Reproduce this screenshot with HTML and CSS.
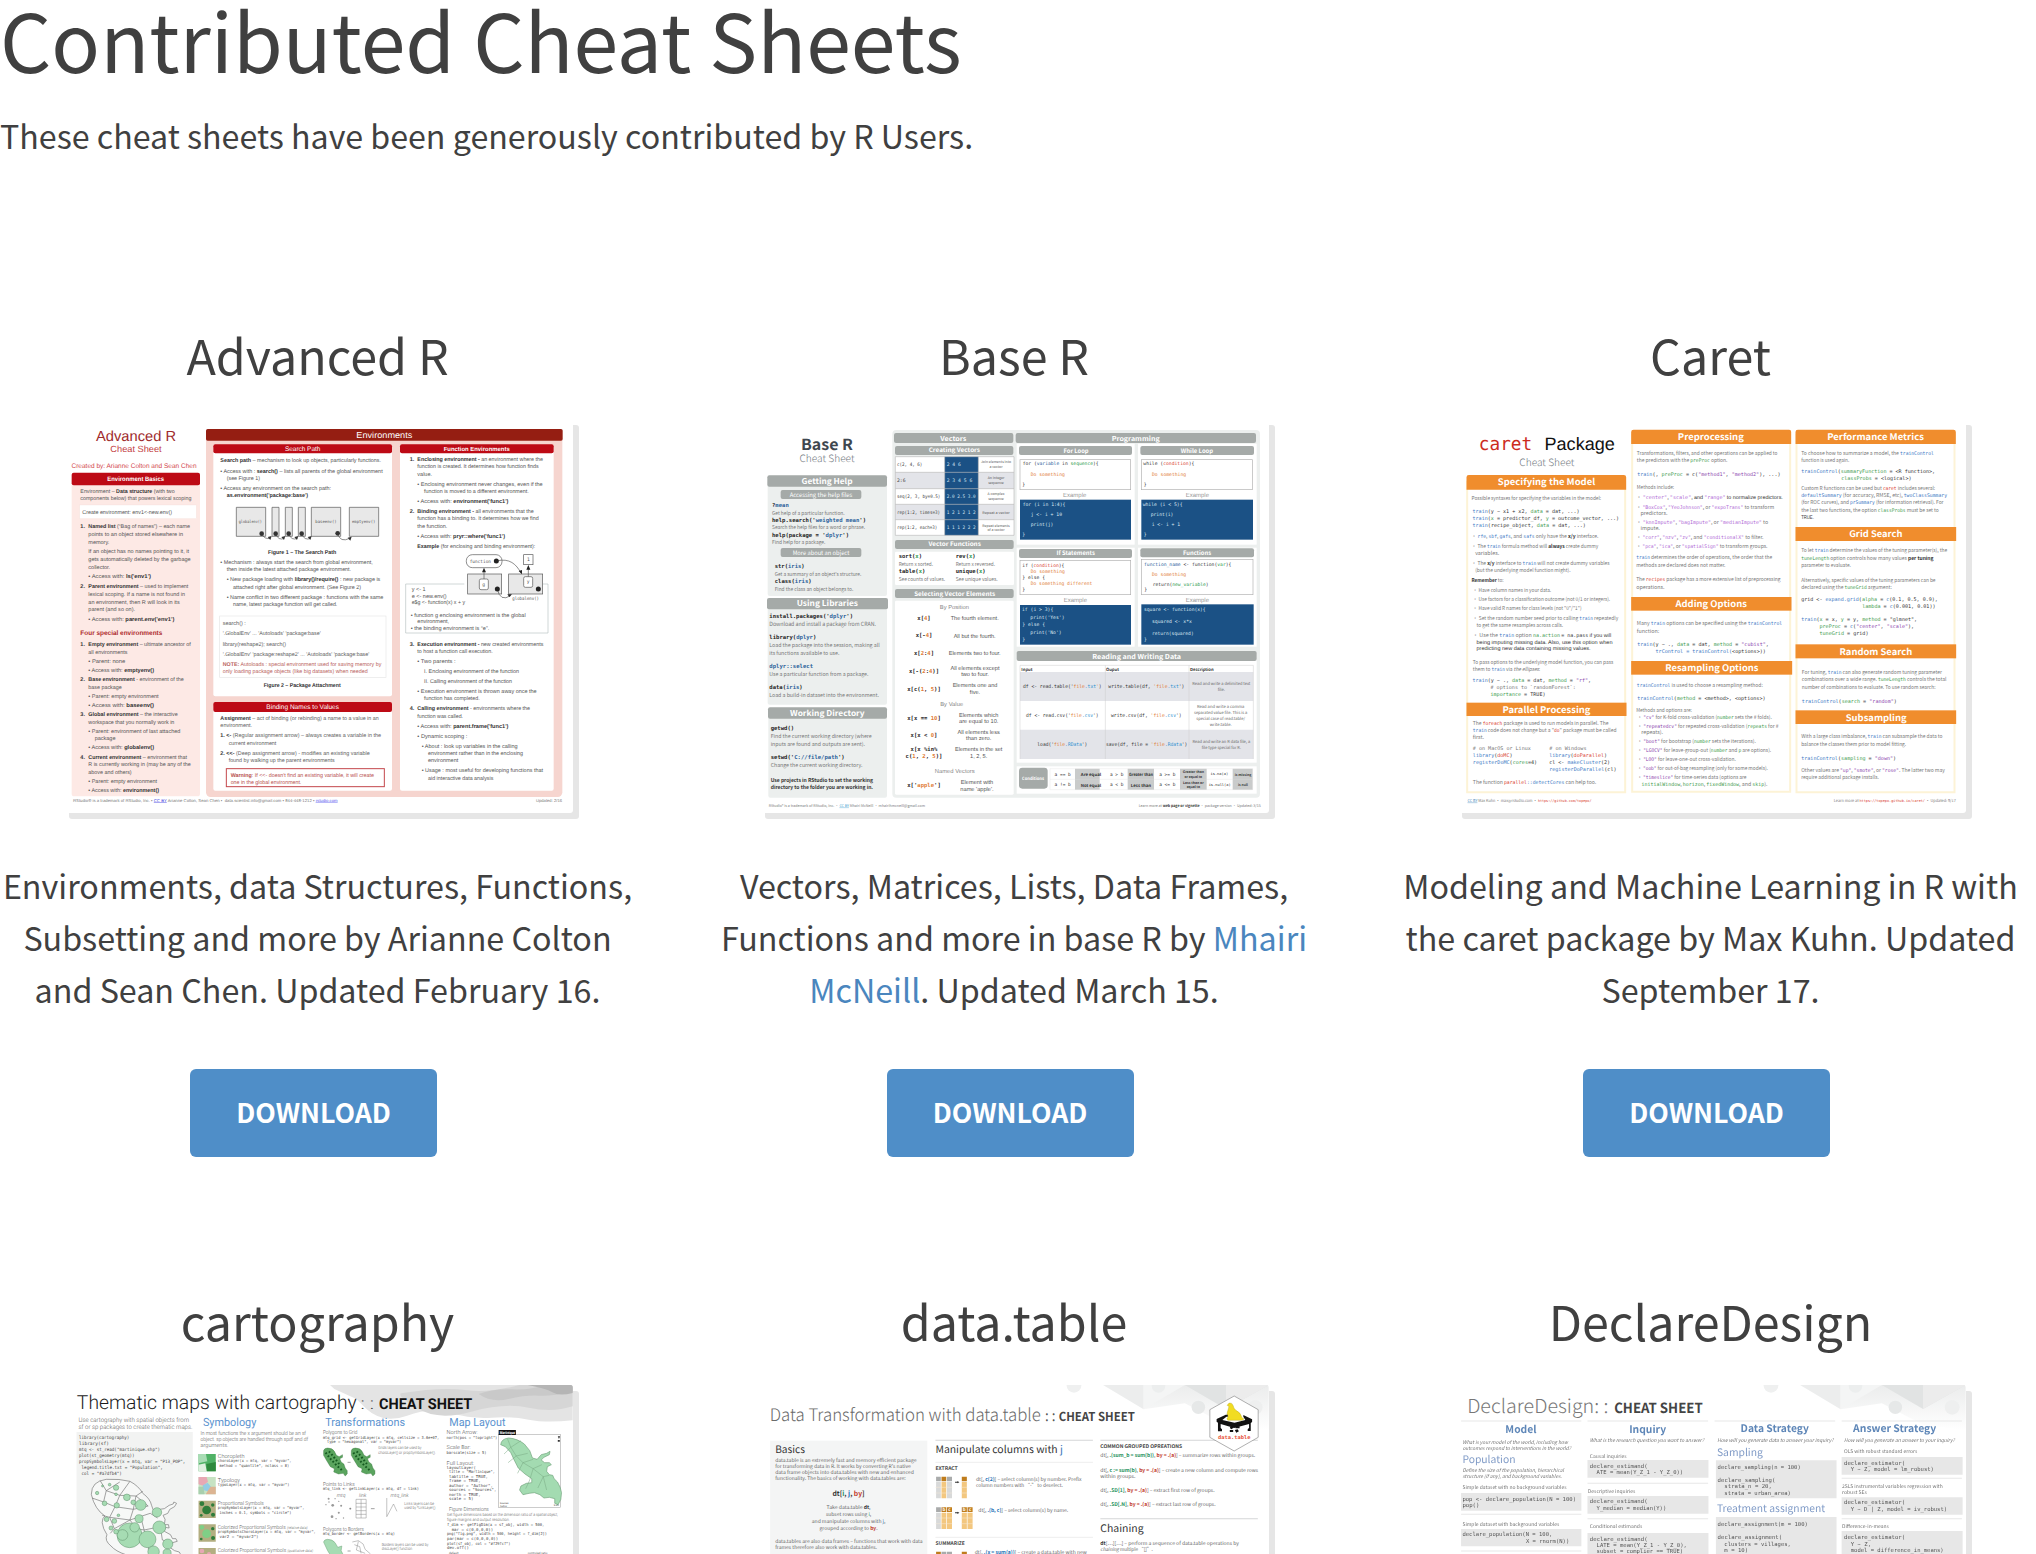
FILE: index.html
```html
<!DOCTYPE html>
<html lang="en">
<head>
<meta charset="utf-8">
<title>Contributed Cheat Sheets</title>
<link rel="stylesheet" href="styles.css">
</head>
<body>
<main class="page">
<h1 class="page-title">Contributed Cheat Sheets</h1>
<p class="lead">These cheat sheets have been generously contributed by R Users.</p>
<section class="grid">

<article class="card">
<h2 class="card-title">Advanced R</h2>
<svg class="thumb arial" viewBox="12 12 1530 1182">
<g class="mid" fill="#a02a2c"><text x="231" y="78" font-size="44" textLength="240">Advanced R</text><text x="231" y="111" font-size="27" fill="#c23a40" textLength="154">Cheat Sheet</text><text x="225" y="159" font-size="20" fill="#d2454b" textLength="375">Created by: Arianne Colton and Sean Chen</text></g>
<rect x="38" y="190" width="385" height="954" rx="8" fill="#fde9e5"/>
<rect x="38" y="173" width="385" height="38" rx="6" fill="#bd0a15"/>
<rect x="441" y="60" width="1069" height="1086" rx="14" fill="#f6d5cf"/>
<rect x="441" y="42" width="1070" height="35" rx="5" fill="#951e12"/>
<rect x="463" y="95" width="536" height="749" rx="6" fill="#fff"/><rect x="463" y="870" width="536" height="257" rx="6" fill="#fff"/><rect x="1023" y="95" width="461" height="1032" rx="6" fill="#fff"/>
<g fill="#bd0a15"><rect x="463" y="88" width="536" height="27" rx="6"/><rect x="463" y="861" width="536" height="30" rx="6"/><rect x="1023" y="88" width="461" height="27" rx="6"/></g>
<g class="mid" fill="#fff"><text x="230" y="199" font-size="19" class="b" textLength="170">Environment Basics</text><text x="976" y="69" font-size="26" textLength="168">Environments</text><text x="731" y="108" font-size="20" textLength="106">Search Path</text><text x="1253" y="108" font-size="18" class="b" textLength="198">Function Environments</text><text x="731" y="883" font-size="20" textLength="218">Binding Names to Values</text></g>
<rect x="62" y="270" width="350" height="41" fill="#fff" stroke="#f3ddd9"/>
<g font-size="16.5" fill="#555">
<text x="64" y="233" textLength="283">Environment – <tspan class="bk">Data structure</tspan> (with two</text>
<text x="64" y="256" textLength="333">components below) that powers lexical scoping</text>
<text x="70" y="296" textLength="269">Create environment: env1&lt;-new.env()</text>
<text x="64" y="338" class="bk">1.</text><text x="88" y="338" textLength="305"><tspan class="bk">Named list</tspan> (“Bag of names”) – each name</text>
<text x="88" y="362" textLength="284">points to an object stored elsewhere in</text>
<text x="88" y="386">memory.</text>
<text x="88" y="414" textLength="302">If an object has no names pointing to it, it</text>
<text x="88" y="438" textLength="307">gets automatically deleted by the garbage</text>
<text x="88" y="462">collector.</text>
<text x="88" y="490" textLength="188">•  Access with: <tspan class="bk">ls('env1')</tspan></text>
<text x="64" y="518" class="bk">2.</text><text x="88" y="518" textLength="300"><tspan class="bk">Parent environment</tspan> – used to implement</text>
<text x="88" y="542" textLength="290">lexical scoping. If a name is not found in</text>
<text x="88" y="566" textLength="274">an environment, then R will look in its</text>
<text x="88" y="589" textLength="140">parent (and so on).</text>
<text x="88" y="618" textLength="258">•  Access with: <tspan class="bk">parent.env('env1')</tspan></text>
<text x="64" y="661" font-size="20" class="b" fill="#ae2b2d" textLength="246">Four special environments</text>
<text x="64" y="694" class="bk">1.</text><text x="88" y="694" textLength="307"><tspan class="bk">Empty environment</tspan> – ultimate ancestor of</text>
<text x="88" y="717" textLength="117">all environments</text>
<text x="88" y="744" textLength="111">•  Parent: none</text>
<text x="88" y="771" textLength="197">•  Access with: <tspan class="bk">emptyenv()</tspan></text>
<text x="64" y="798" class="bk">2.</text><text x="88" y="798" textLength="286"><tspan class="bk">Base environment</tspan> - environment of the</text>
<text x="88" y="821" textLength="100">base package</text>
<text x="88" y="848" textLength="211">•  Parent: empty environment</text>
<text x="88" y="876" textLength="197">•  Access with: <tspan class="bk">baseenv()</tspan></text>
<text x="64" y="903" class="bk">3.</text><text x="88" y="903" textLength="268"><tspan class="bk">Global environment</tspan> – the interactive</text>
<text x="88" y="926" textLength="258">workspace that you normally work in</text>
<text x="88" y="953" textLength="276">•  Parent: environment of last attached</text>
<text x="107" y="976">package</text>
<text x="88" y="1003" textLength="197">•  Access with: <tspan class="bk">globalenv()</tspan></text>
<text x="64" y="1031" class="bk">4.</text><text x="88" y="1031" textLength="296"><tspan class="bk">Current environment</tspan> – environment that</text>
<text x="88" y="1054" textLength="307">R is currently working in (may be any of the</text>
<text x="88" y="1076" textLength="130">above and others)</text>
<text x="88" y="1103" textLength="206">• Parent: empty environment</text>
<text x="88" y="1130" textLength="212">• Access with: <tspan class="bk">environment()</tspan></text>
<text x="484" y="142" textLength="482"><tspan class="bk">Search path</tspan> – mechanism  to look up objects, particularly functions.</text>
<text x="484" y="173" textLength="487">•  Access with : <tspan class="bk">search()</tspan> – lists all parents of the global environment</text>
<text x="503" y="194" textLength="100">(see Figure 1)</text>
<text x="484" y="225" textLength="332">•  Access any environment on the search path:</text>
<text x="503" y="246" class="bk" textLength="244">as.environment('package:base')</text>
<text x="627" y="417" class="bk" textLength="205">Figure 1 – The Search Path</text>
<text x="484" y="447" textLength="457">•  Mechanism : always start the search from global environment,</text>
<text x="503" y="469" textLength="373">then inside the latest attached package environment.</text>
<text x="503" y="499" textLength="461">•  New package loading with <tspan class="bk">library()/require()</tspan> : new package is</text>
<text x="522" y="521" textLength="384">attached right after global environment. (See Figure 2)</text>
<text x="503" y="551" textLength="470">•  Name conflict in two different package : functions with the same</text>
<text x="522" y="573" textLength="313">name, latest package function will get called.</text>
</g>
<rect x="482" y="603" width="499" height="184" fill="none" stroke="#e6e6e6" stroke-width="2"/>
<g font-size="16.5" fill="#606060">
<text x="491" y="631">search() :</text><text x="491" y="661" textLength="294">'.GlobalEnv' ... 'Autoloads' 'package:base'</text><text x="491" y="692" textLength="190">library(reshape2); search()</text><text x="491" y="722" textLength="440">'.GlobalEnv'  'package:reshape2' ... 'Autoloads' 'package:base'</text>
<g fill="#b95f60"><text x="491" y="752" textLength="476"><tspan class="b">NOTE:</tspan> Autoloads : special environment used for saving memory by</text><text x="491" y="773" textLength="435">only loading package objects (like big datasets) when needed</text></g>
<text x="614" y="816" class="bk" textLength="231">Figure 2 – Package Attachment</text>
<text x="484" y="916" textLength="475"><tspan class="bk">Assignment</tspan> – act of binding (or rebinding) a name to a value in an</text><text x="484" y="937">environment.</text>
<text x="484" y="967" textLength="482"><tspan class="bk">1.  &lt;-</tspan> (Regular assignment arrow) – always creates a variable in the</text><text x="509" y="989" textLength="143">current environment</text>
<text x="484" y="1019" textLength="448"><tspan class="bk">2.  &lt;&lt;-</tspan> (Deep assignment arrow) - modifies an existing variable</text><text x="509" y="1041" textLength="318">found by walking up the parent environments</text>
<rect x="502" y="1061" width="474" height="54" fill="none" stroke="#c4474c" stroke-width="3"/>
<g fill="#b8504f"><text x="515" y="1086" textLength="430"><tspan class="b">Warning</tspan>: If &lt;&lt;- doesn't find an existing variable, it will create</text><text x="515" y="1106" textLength="212">one in the global environment.</text></g>
</g>
<g fill="#e8e8e8" stroke="#555" stroke-width="2"><path d="M532 277h88v87h-88zM639 277h21v87h-21zM679 277h21v87h-21zM718 277h21v87h-21zM757 277h88v87h-88zM871 277h88v87h-88z"/><path fill="none" d="M608 356q8 18 26 14M650 356q8 22 26 14M689 356q8 22 26 14M728 356q8 22 27 14M836 356q8 28 36 14"/></g>
<g fill="#333"><circle cx="608" cy="356" r="7"/><circle cx="650" cy="356" r="7"/><circle cx="689" cy="356" r="7"/><circle cx="728" cy="356" r="7"/><circle cx="836" cy="355" r="7"/><path d="M626 366l12-3-4 12zM667 366l12-3-4 12zM706 366l12-3-4 12zM746 366l12-3-4 12zM866 368l12-3-4 12z"/></g>
<g class="mono" font-size="12.5" fill="#555"><text x="539" y="325" textLength="70">globalenv()</text><text x="769" y="325" textLength="64">baseenv()</text><text x="879" y="325" textLength="70">emptyenv()</text></g>
<g font-size="16.5" fill="#555">
<text x="1052" y="138" class="bk">1.</text><text x="1075" y="138" textLength="377"><tspan class="bk">Enclosing environment -</tspan> an environment where the</text><text x="1075" y="160" textLength="364">function is created. It determines how function finds</text><text x="1075" y="182">value.</text>
<text x="1075" y="212" textLength="376">•  Enclosing environment never changes, even if the</text><text x="1095" y="234" textLength="314">function is moved to a different environment.</text>
<text x="1075" y="264" textLength="273">•  Access with: <tspan class="bk">environment('func1')</tspan></text>
<text x="1052" y="295" class="bk">2.</text><text x="1075" y="295" textLength="349"><tspan class="bk">Binding environment -</tspan> all environments that the</text><text x="1075" y="316" textLength="364">function has a binding to. It determines how we find</text><text x="1075" y="338">the function.</text>
<text x="1075" y="368" textLength="263">•  Access with: <tspan class="bk">pryr::where('func1')</tspan></text>
<text x="1075" y="398" textLength="354"><tspan class="bk">Example</tspan> (for enclosing and binding environment):</text>
<path fill="none" stroke="#b9c2c2" stroke-width="2" d="M1216 507h-176v147h427V507h-15"/>
<text x="1058" y="529">y &lt;- 1</text><text x="1058" y="548">e &lt;- new.env()</text><text x="1058" y="567" textLength="160">e$g &lt;- function(x) x + y</text>
<text x="1055" y="606" textLength="345">•   function g enclosing environment is the global</text><text x="1075" y="625">environment,</text><text x="1055" y="644" textLength="236">•   the binding environment is “e”.</text>
<text x="1052" y="692" class="bk">3.</text><text x="1075" y="692" textLength="378"><tspan class="bk">Execution environment -</tspan> new created environments</text><text x="1075" y="713" textLength="226">to host a function call execution.</text>
<text x="1075" y="744" textLength="115">•  Two parents :</text><text x="1095" y="774" textLength="285">I.  Enclosing environment of the function</text><text x="1095" y="804" textLength="264">II. Calling environment of the function</text>
<text x="1075" y="834" textLength="358">•  Execution environment is thrown away once the</text><text x="1095" y="856" textLength="167">function has completed.</text>
<text x="1052" y="886" class="bk">4.</text><text x="1075" y="886" textLength="338"><tspan class="bk">Calling environment</tspan> - environments where the</text><text x="1075" y="908" textLength="137">function was called.</text>
<text x="1075" y="938" textLength="273">•  Access with: <tspan class="bk">parent.frame('func1')</tspan></text><text x="1075" y="968" textLength="150">•  Dynamic scoping :</text>
<text x="1088" y="998" textLength="288">•  About : look up variables in the calling</text><text x="1107" y="1020" textLength="285">environment rather than in the enclosing</text><text x="1107" y="1041">environment</text>
<text x="1088" y="1072" textLength="364">•  Usage : most useful for developing functions that</text><text x="1107" y="1094" textLength="196">aid interactive data analysis</text>
</g>
<g stroke="#555" stroke-width="2" fill="#fff"><rect x="1222" y="419" width="107" height="39" rx="18"/><rect x="1394" y="419" width="28" height="30"/><g fill="#e8e8e8"><rect x="1226" y="477" width="102" height="60"/><rect x="1349" y="477" width="102" height="60"/></g><rect x="1261" y="492" width="27" height="32" rx="5"/><rect x="1394" y="485" width="27" height="32" rx="5"/><path fill="none" d="M1275 492v-26M1408 485v-28M1312 438c40-10 60 10 74 36M1315 522q8 40 40 20"/></g>
<g fill="#222"><circle cx="1312" cy="438" r="7.5"/><circle cx="1315" cy="522" r="7.5"/><circle cx="1438" cy="522" r="7.5"/><path d="M1275 458l6 14h-12zM1408 450l6 14h-12zM1389 478l-10-10 10-3zM1359 538l-14 0 6 8z"/></g>
<g class="mono" font-size="14" fill="#555"><text x="1232" y="443" textLength="64">function</text><text x="1404" y="439">1</text><text x="1270" y="512">g</text><text x="1403" y="505">y</text><text x="1360" y="556" textLength="80">globalenv()</text></g>
<g font-size="12.5" fill="#777"><text x="42" y="1161" textLength="448">RStudio® is a trademark of RStudio, Inc.  •  <tspan fill="#33d" text-decoration="underline">CC BY</tspan>  Arianne Colton, Sean Chen •</text><text x="497" y="1161" textLength="339">data.scientist.info@gmail.com  •  844-448-1212 • <tspan fill="#55e" text-decoration="underline">rstudio.com</tspan></text><text x="1431" y="1161" textLength="78">Updated: 2/16</text></g>
</svg>
<p class="desc">Environments, data Structures, Functions,<br>Subsetting and more by Arianne Colton<br>and Sean Chen. Updated February 16.</p>
<a class="btn">DOWNLOAD</a>
</article>

<article class="card">
<h2 class="card-title">Base R</h2>
<svg class="thumb src" viewBox="0 12 1530 1182">
<g fill="#ecefee"><rect x="26" y="195" width="358" height="348" rx="6"/><rect x="26" y="560" width="358" height="309" rx="6"/><rect x="28" y="880" width="356" height="268" rx="6"/><rect x="400" y="45" width="1103" height="1103" rx="12"/></g>
<g fill="#fff"><rect x="408" y="410" width="357" height="100" rx="4"/><rect x="408" y="557" width="356" height="582" rx="4"/><rect x="773" y="86" width="354" height="303"/><rect x="1137" y="86" width="356" height="303"/><rect x="773" y="398" width="354" height="297"/><rect x="1137" y="398" width="356" height="297"/><rect x="773" y="715" width="720" height="328"/><rect x="773" y="1054" width="720" height="82"/></g>
<g fill="#a5aaa8"><rect x="25" y="181" width="359" height="34" rx="6"/><rect x="65" y="225" width="242" height="27" rx="6"/><rect x="65" y="399" width="242" height="27" rx="6"/><rect x="24" y="549" width="363" height="34" rx="6"/><rect x="27" y="877" width="357" height="34" rx="6"/><rect x="405" y="54" width="358" height="30" rx="6"/><rect x="408" y="93" width="355" height="27" rx="6"/><rect x="408" y="375" width="356" height="27" rx="6"/><rect x="408" y="522" width="356" height="27" rx="6"/><rect x="770" y="54" width="721" height="30" rx="6"/><rect x="780" y="93" width="339" height="27" rx="6"/><rect x="1144" y="93" width="341" height="27" rx="6"/><rect x="780" y="402" width="339" height="27" rx="6"/><rect x="1144" y="400" width="341" height="27" rx="6"/><rect x="773" y="708" width="720" height="30" rx="6"/><rect x="780" y="1058" width="86" height="63" rx="10"/></g>
<text class="mid b" x="204" y="105" font-size="46" fill="#3f474f" textLength="156">Base R</text><text class="mid l" x="204" y="140" font-size="30" fill="#70777d" textLength="165">Cheat Sheet</text>
<g class="mid b" fill="#fff" font-size="24"><text x="204" y="207" textLength="153">Getting Help</text><text x="205" y="574" textLength="184">Using Libraries</text><text x="205" y="902" textLength="224">Working Directory</text><text x="583" y="77" font-size="20" textLength="78">Vectors</text><text x="1130" y="77" font-size="20" textLength="144">Programming</text><text x="1133" y="731" font-size="20" textLength="266">Reading and Writing Data</text>
<g font-size="18"><text x="586" y="112" textLength="154">Creating Vectors</text><text x="587" y="394" textLength="157">Vector Functions</text><text x="587" y="542" textLength="243">Selecting Vector Elements</text><text x="951" y="113" textLength="75">For Loop</text><text x="1314" y="113" textLength="97">While Loop</text><text x="950" y="421" textLength="115">If Statements</text><text x="1314" y="420" textLength="84">Functions</text></g>
<g font-weight="400" font-size="18"><text x="186" y="246" textLength="188">Accessing the help files</text><text x="186" y="419" textLength="170">More about an object</text></g><text x="822" y="1095" font-size="13" textLength="66">Conditions</text></g>
<g class="mono b" font-size="16.7" fill="#222">
<text x="39" y="276">?<tspan class="bl">mean</tspan></text><text x="39" y="321" textLength="282">help.search('<tspan class="bl">weighted mean</tspan>')</text><text x="39" y="365" textLength="231">help(package = '<tspan class="bl">dplyr</tspan>')</text><text x="47" y="460" textLength="90">str(<tspan class="bl">iris</tspan>)</text><text x="47" y="504" textLength="111">class(<tspan class="bl">iris</tspan>)</text>
<text x="31" y="609" textLength="251">install.packages('<tspan class="bl">dplyr</tspan>')</text><text x="31" y="672" textLength="141">library(<tspan class="bl">dplyr</tspan>)</text><text x="31" y="758" class="bl" textLength="131">dplyr::select</text><text x="31" y="821" textLength="100">data(<tspan class="bl">iris</tspan>)</text><text x="35" y="946">getwd()</text><text x="35" y="1032" textLength="222">setwd('<tspan class="bl">C://file/path</tspan>')</text>
<text x="419" y="430" textLength="70">sort(<tspan fill="#2b9a4a">x</tspan>)</text><text x="590" y="430" textLength="60">rev(<tspan fill="#2b9a4a">x</tspan>)</text><text x="419" y="475" textLength="80">table(<tspan fill="#2b9a4a">x</tspan>)</text><text x="590" y="475" textLength="90">unique(<tspan fill="#2b9a4a">x</tspan>)</text>
<g class="mid"><text x="495" y="614">x[<tspan class="or">4</tspan>]</text><text x="495" y="667">x[-<tspan class="or">4</tspan>]</text><text x="495" y="720">x[<tspan class="or">2</tspan>:<tspan class="or">4</tspan>]</text><text x="495" y="773">x[-(<tspan class="or">2</tspan>:<tspan class="or">4</tspan>)]</text><text x="495" y="827">x[c(<tspan class="or">1</tspan>, <tspan class="or">5</tspan>)]</text><text x="495" y="914">x[x == <tspan class="or">10</tspan>]</text><text x="495" y="966">x[x &lt; <tspan class="or">0</tspan>]</text><text x="495" y="1009">x[x %in%</text><text x="495" y="1028">c(<tspan class="or">1</tspan>, <tspan class="or">2</tspan>, <tspan class="or">5</tspan>)]</text><text x="495" y="1117">x['<tspan class="or">apple</tspan>']</text></g></g>
<g font-size="16" fill="#777">
<text x="39" y="299" textLength="218">Get help of a particular function.</text><text x="39" y="343" textLength="279">Search the help files for a word or phrase.</text><text x="39" y="388" textLength="160">Find help for a package.</text><text x="47" y="483" textLength="260">Get a summary of an object's structure.</text><text x="47" y="527" textLength="236">Find the class an object belongs to.</text>
<text x="31" y="633" font-size="17" textLength="320">Download and install a package from CRAN.</text><text x="31" y="695" textLength="331">Load the package into the session, making all</text><text x="31" y="719" textLength="210">its functions available to use.</text><text x="31" y="782" textLength="297">Use a particular function from a package.</text><text x="31" y="845" textLength="329">Load a build-in dataset into the environment.</text><text x="35" y="970" textLength="303">Find the current working directory (where</text><text x="35" y="994" textLength="283">inputs are found and outputs are sent).</text><text x="35" y="1057" textLength="275">Change the current working directory.</text>
<text x="35" y="1102" class="bk" textLength="307">Use projects in RStudio to set the working</text><text x="35" y="1123" class="bk" textLength="307">directory to the folder you are working in.</text>
<text x="419" y="452" textLength="103">Return x sorted.</text><text x="590" y="452" textLength="118">Return x reversed.</text><text x="419" y="499" textLength="139">See counts of values.</text><text x="590" y="499" textLength="126">See unique values.</text>
<text x="29" y="1177" font-size="11.5" textLength="469">RStudio® is a trademark of RStudio, Inc.  •  <tspan fill="#39c" text-decoration="underline">CC BY</tspan> Mhairi McNeill  •  mhairihmcneill@gmail.com</text><text x="1139" y="1177" font-size="11.5" textLength="366">Learn more at <tspan class="bk">web page or vignette</tspan>  •  package version  •  Updated: 3/15</text></g>
<g class="mid arial" fill="#888" font-size="17.5"><text x="586" y="581">By Position</text><text x="578" y="874">By Value</text><text x="587" y="1074">Named Vectors</text></g>
<g class="mid arial" fill="#555" font-size="17"><text x="647" y="614" textLength="144">The fourth element.</text><text x="647" y="668" textLength="126">All but the fourth.</text><text x="647" y="720" textLength="156">Elements two to four.</text><text x="648" y="764" textLength="147">All elements except</text><text x="648" y="783">two to four.</text><text x="648" y="817" textLength="134">Elements one and</text><text x="648" y="836">five.</text><text x="659" y="905" textLength="118">Elements which</text><text x="659" y="924">are equal to 10.</text><text x="659" y="957">All elements less</text><text x="659" y="976">than zero.</text><text x="659" y="1009" textLength="142">Elements in the set</text><text x="659" y="1028">1, 2, 5.</text><text x="654" y="1108">Element with</text><text x="654" y="1127">name 'apple'.</text></g>
<rect x="409" y="125" width="356" height="236" fill="#fff"/><path fill="#e3e4e9" d="M409 172h356v49H409zM409 268h356v46H409z"/><rect x="557" y="125" width="101" height="236" fill="#1b5185"/><path fill="none" stroke="#bbb" stroke-width="2" d="M409 125h356v236H409zM409 172h356M409 221h356M409 268h356M409 314h356M557 125v236M658 125v236"/>
<g class="mono" font-size="14.2" fill="#444"><text x="414" y="154" textLength="76">c(2, 4, 6)</text><text x="414" y="201">2:6</text><text x="414" y="249" textLength="130">seq(2, 3, by=0.5)</text><text x="414" y="297" textLength="129">rep(1:2, times=3)</text><text x="414" y="343" textLength="121">rep(1:2, each=3)</text><g fill="#cfe0ee"><text x="563" y="154">2 4 6</text><text x="563" y="201">2 3 4 5 6</text><text x="563" y="249" textLength="87">2.0 2.5 3.0</text><text x="563" y="297" textLength="87">1 2 1 2 1 2</text><text x="563" y="343" textLength="87">1 1 1 2 2 2</text></g></g>
<g class="mid" font-size="10.5" fill="#555"><text x="711" y="145" textLength="90">Join elements into</text><text x="711" y="160">a vector</text><text x="711" y="193">An integer</text><text x="711" y="207">sequence</text><text x="711" y="241">A complex</text><text x="711" y="255">sequence</text><text x="711" y="296" textLength="82">Repeat a vector</text><text x="711" y="335">Repeat elements</text><text x="711" y="349">of a vector</text></g>
<g fill="#fff" stroke="#b0b0b0" stroke-width="2"><rect x="783" y="134" width="332" height="90"/><rect x="1147" y="134" width="333" height="90"/><rect x="783" y="436" width="332" height="103"/><rect x="1147" y="433" width="335" height="106"/></g>
<g fill="#1b5185"><rect x="783" y="254" width="333" height="120"/><rect x="1147" y="254" width="335" height="120"/><rect x="783" y="570" width="333" height="119"/><rect x="1147" y="568" width="337" height="121"/></g>
<g class="mid arial" fill="#999" font-size="18"><text x="947" y="246">Example</text><text x="1315" y="247">Example</text><text x="949" y="562">Example</text><text x="1315" y="560">Example</text></g>
<g class="mono" font-size="14.2" fill="#333"><text x="791" y="151" textLength="228">for (<tspan class="bl">variable</tspan> in <tspan class="gr">sequence</tspan>){</text><text x="815" y="183" class="or">Do something</text><text x="790" y="213">}</text><text x="1153" y="151" textLength="153">while (<tspan class="re">condition</tspan>){</text><text x="1179" y="183" class="or">Do something</text><text x="1154" y="213">}</text>
<text x="790" y="455" textLength="126">if (<tspan class="re">condition</tspan>){</text><text x="815" y="473" class="or">Do something</text><text x="790" y="492">} else {</text><text x="815" y="511" class="or" textLength="185">Do something different</text><text x="790" y="529">}</text><text x="1155" y="452" textLength="262"><tspan class="bl">function_name</tspan> &lt;- function(<tspan class="gr">var</tspan>){</text><text x="1179" y="483" class="or">Do something</text><text x="1181" y="514" textLength="168">return(<tspan class="gr">new_variable</tspan>)</text><text x="1156" y="528">}</text>
<g fill="#dfe9f2"><text x="791" y="272">for (i in 1:4){</text><text x="815" y="302">j &lt;- i + 10</text><text x="815" y="333">print(j)</text><text x="790" y="363">}</text><text x="1151" y="272">while (i &lt; 5){</text><text x="1175" y="302">print(i)</text><text x="1178" y="333">i &lt;- i + 1</text><text x="1154" y="363">}</text><text x="789" y="587">if (i &gt; 3){</text><text x="814" y="611">print('Yes')</text><text x="790" y="634">} else {</text><text x="814" y="657">print('No')</text><text x="790" y="679">}</text><text x="1155" y="587" textLength="185">square &lt;- function(x){</text><text x="1179" y="624">squared &lt;- x*x</text><text x="1179" y="660" textLength="125">return(squared)</text><text x="1155" y="678">}</text></g></g>
<path fill="#e3e4e9" d="M783 771h700v87H783zM783 944h700v88H783z"/><path fill="none" stroke="#ccc" stroke-width="1.5" d="M783 1032V751h700v281M1039 751v281M1290 751v281"/>
<g font-size="12.5" class="bk"><text x="787" y="768">Input</text><text x="1041" y="768">Ouput</text><text x="1293" y="768">Description</text></g>
<g class="mono mid" font-size="15" fill="#333"><text x="910" y="818" textLength="236">df &lt;- read.table('<tspan class="or">file</tspan><tspan class="cy">.txt</tspan><tspan class="or">'</tspan>)</text><text x="1162" y="818" textLength="228">write.table(df, <tspan class="or">'file</tspan><tspan class="cy">.txt</tspan>')</text><text x="910" y="905" textLength="218">df &lt;- read.csv('<tspan class="or">file</tspan><tspan class="cy">.csv</tspan>')</text><text x="1162" y="905" textLength="212">write.csv(df, <tspan class="or">'file</tspan><tspan class="cy">.csv</tspan>')</text><text x="910" y="993" textLength="150">load('<tspan class="or">file</tspan><tspan class="cy">.RData</tspan>')</text><text x="1163" y="993" textLength="244">save(df, file = <tspan class="or">'file</tspan><tspan class="cy">.Rdata</tspan>')</text></g>
<g class="mid" font-size="12.5" fill="#666"><text x="1387" y="811" textLength="174">Read and write a delimited text</text><text x="1387" y="828">file.</text><text x="1385" y="879" textLength="142">Read and write a comma</text><text x="1385" y="897" textLength="160">separated value file. This is a</text><text x="1385" y="916" textLength="146">special case of read.table/</text><text x="1385" y="934">write.table.</text><text x="1387" y="985" textLength="173">Read and write an R data file, a</text><text x="1387" y="1002" textLength="118">file type special for R.</text></g>
<path fill="#c9cbcb" d="M948 1061h74v63h-74zM1106 1061h79v63h-79zM1263 1061h80v63h-80zM1421 1061h60v63h-60z"/><path fill="none" stroke="#ddd" d="M873 1061h608v63H873zM873 1093h608"/>
<g class="mid mono" font-size="13.5" fill="#333"><text x="911" y="1082">a == b</text><text x="911" y="1114">a != b</text><text x="1073" y="1082">a &gt; b</text><text x="1073" y="1114">a &lt; b</text><text x="1225" y="1082">a &gt;= b</text><text x="1225" y="1114">a &lt;= b</text><text x="1381" y="1081" font-size="11">is.na(a)</text><text x="1382" y="1113" font-size="11">is.null(a)</text></g>
<g class="mid bk" font-size="12.5"><text x="996" y="1083" textLength="61">Are equal</text><text x="996" y="1115" textLength="61">Not equal</text><text x="1146" y="1083" textLength="72">Greater than</text><text x="1146" y="1115" textLength="61">Less than</text><g font-size="10"><text x="1303" y="1074" textLength="64">Greater than</text><text x="1303" y="1088" textLength="53">or equal to</text><text x="1303" y="1106" textLength="62">Less than or</text><text x="1303" y="1120" textLength="40">equal to</text><text x="1452" y="1083" textLength="50">is missing</text><text x="1452" y="1114">is null</text></g></g>
</svg>
<p class="desc">Vectors, Matrices, Lists, Data Frames,<br>Functions and more in base R by <span class="link">Mhairi<br>McNeill</span>. Updated March 15.</p>
<a class="btn">DOWNLOAD</a>
</article>

<article class="card">
<h2 class="card-title">Caret</h2>
<svg class="thumb src" viewBox="4.5 12 1530 1182">
<g fill="#fff" stroke="#fdf3d6" stroke-width="6"><path d="M38 200h474v932H38zM533 60h474v1070H533zM1026 60h474v1072h-474z"/></g>
<g fill="#f08d2d"><path d="M36 224v-37q0-7 7-7h465q7 0 7 7v37zM530 87V51q0-7 7-7h467q6 0 6 7v36zM1023 87V51q0-7 7-7h467q7 0 7 7v36z"/><rect x="36" y="863" width="480" height="40"/><rect x="530" y="546" width="481" height="41"/><rect x="530" y="738" width="483" height="41"/><rect x="1023" y="336" width="482" height="42"/><rect x="1023" y="688" width="482" height="42"/><rect x="1023" y="886" width="482" height="41"/></g>
<text class="mono" x="73" y="104" font-size="55" fill="#cc2c1e" textLength="160">caret</text><text class="arial" x="270" y="104" font-size="54" fill="#111" textLength="211">Package</text><text class="mid l" x="277" y="154" font-size="30" fill="#70777d" textLength="165">Cheat Sheet</text>
<g class="mid b" fill="#fff" font-size="27"><text x="276" y="211" textLength="292">Specifying the Model</text><text x="276" y="895" textLength="264">Parallel Processing</text><text x="769" y="75" textLength="198">Preprocessing</text><text x="770" y="577" textLength="214">Adding Options</text><text x="772" y="769" textLength="280">Resampling Options</text><text x="1263" y="75" textLength="290">Performance Metrics</text><text x="1264" y="367" textLength="160">Grid Search</text><text x="1264" y="720" textLength="218">Random Search</text><text x="1265" y="919" textLength="183">Subsampling</text></g>
<g font-size="16" fill="#777">
<text x="51" y="254" textLength="389">Possible syntaxes for specifying the variables in the model:</text>
<text x="51" y="370" textLength="381">• <tspan class="c">rfe</tspan>, <tspan class="c">sbf</tspan>, <tspan class="c">gafs</tspan>, and <tspan class="c">safs</tspan> only have the <tspan class="bk">x/y</tspan> interface.</text>
<text x="51" y="399" textLength="380">• The <tspan class="c">train</tspan> formula method will <tspan class="bk">always</tspan> create dummy</text><text x="62" y="420">variables.</text>
<text x="51" y="449" textLength="414">• The <tspan class="bk">x/y</tspan> interface to <tspan class="c">train</tspan> will not create dummy variables</text><text x="62" y="471" textLength="286">(but the underlying model function might).</text>
<text x="51" y="500" textLength="96"><tspan class="bk">Remember</tspan> to:</text><text x="55" y="530" textLength="235">• Have column names in your data.</text><text x="55" y="558" textLength="412">• Use factors for a classification outcome (not 0/1 or integers).</text><text x="55" y="586" textLength="326">• Have valid R names for class levels (not "0"/"1")</text><text x="55" y="614" textLength="436">• Set the random number seed prior to calling <tspan class="c">train</tspan> repeatedly</text><text x="66" y="636" textLength="260">to get the same resamples across calls.</text>
<text x="55" y="665" textLength="415">• Use the <tspan class="c">train</tspan> option <tspan class="g">na.action</tspan> <tspan class="k">= na.pass</tspan> <tspan class="dk">if you will</tspan></text><text x="66" y="686" class="dk" textLength="408">being imputing missing data. Also, use this option when</text><text x="66" y="705" class="dk" textLength="342">predicting new data containing missing values.</text>
<text x="55" y="748" textLength="421">To pass options to the underlying model function, you can pass</text><text x="55" y="769" textLength="202">them to <tspan class="c">train</tspan> via <tspan font-style="italic">the ellipses</tspan>:</text>
<text x="55" y="929" textLength="407">The <tspan class="r">foreach</tspan> package is used to run models in parallel. The</text><text x="55" y="951" textLength="431"><tspan class="c">train</tspan> code does not change but a "<tspan class="r">do</tspan>" package must be called</text><text x="55" y="973">first.</text><text x="55" y="1106" textLength="370">The function <tspan class="r">parallel</tspan><tspan class="c">::detectCores</tspan> can help too.</text>
<text x="547" y="121" textLength="422">Transformations, filters, and other operations can be applied to</text><text x="547" y="142" textLength="272">the predictors with the <tspan class="g">preProc</tspan> option.</text><text x="547" y="222" textLength="112">Methods include:</text>
<text x="545" y="253" textLength="440">• <tspan class="p">"center"</tspan>, <tspan class="p">"scale"</tspan>, <tspan class="dk">and</tspan> <tspan class="p">"range"</tspan> <tspan class="dk">to normalize predictors.</tspan></text><text x="545" y="281" textLength="414">• <tspan class="p">"BoxCox"</tspan>, <tspan class="p">"YeoJohnson"</tspan>, or <tspan class="p">"expoTrans"</tspan> to transform</text><text x="558" y="300">predictors.</text><text x="545" y="327" textLength="396">• <tspan class="p">"knnImpute"</tspan>, <tspan class="p">"bagImpute"</tspan>, or <tspan class="p">"medianImpute"</tspan> to</text><text x="558" y="346">impute.</text><text x="545" y="372" textLength="382">• <tspan class="p">"corr"</tspan>, <tspan class="p">"nzv"</tspan>, <tspan class="p">"zv"</tspan>, and <tspan class="p">"conditionalX"</tspan> to filter.</text><text x="545" y="399" textLength="394">• <tspan class="p">"pca"</tspan>, <tspan class="p">"ica"</tspan>, or <tspan class="p">"spatialSign"</tspan> to transform groups.</text>
<text x="545" y="433" textLength="408"><tspan class="c">train</tspan> determines the order of operations, the order that the</text><text x="545" y="455" textLength="268">methods are declared does not matter.</text><text x="545" y="499" textLength="433">The <tspan class="r">recipes</tspan> package has a more extensive list of preprocessing</text><text x="545" y="521">operations.</text>
<text x="547" y="631" textLength="436">Many <tspan class="c">train</tspan>  options can be specified using the <tspan class="c">trainControl</tspan></text><text x="547" y="653">function:</text><text x="547" y="817" textLength="378"><tspan class="c">trainControl</tspan> is used to choose a resampling method:</text>
<text x="545" y="891" textLength="167">Methods and options are:</text><text x="548" y="911" textLength="404">• <tspan class="q">"cv"</tspan> for K-fold cross-validation (<tspan class="g">number</tspan> sets the # folds).</text><text x="548" y="939" textLength="424">• <tspan class="q">"repeatedcv"</tspan> for repeated cross-validation (<tspan class="g">repeats</tspan> for #</text><text x="560" y="958">repeats).</text><text x="548" y="985" textLength="356">• <tspan class="q">"boot"</tspan> for bootstrap (<tspan class="g">number</tspan> sets the iterations).</text><text x="548" y="1012" textLength="402">• <tspan class="q">"LGOCV"</tspan> for leave-group-out (<tspan class="g">number</tspan> and <tspan class="g">p</tspan> are options).</text><text x="548" y="1039" textLength="296">• <tspan class="q">"LOO"</tspan> for leave-one-out cross-validation.</text><text x="548" y="1065" textLength="392">• <tspan class="q">"oob"</tspan> for out-of-bag resampling (only for some models).</text><text x="548" y="1092" textLength="328">• <tspan class="q">"timeslice"</tspan> for time-series data (options are</text><text x="561" y="1114" textLength="378"><tspan class="g">initialWindow</tspan>, <tspan class="g">horizon</tspan>, <tspan class="g">fixedWindow</tspan>, and <tspan class="g">skip</tspan>).</text>
<text x="1040" y="120" textLength="398">To choose how to summarize a model, the <tspan class="c">trainControl</tspan></text><text x="1040" y="142" textLength="144">function is used again.</text><text x="1040" y="224" textLength="402">Custom R functions can be used but <tspan class="r">caret</tspan> includes several:</text><text x="1040" y="246" textLength="438"><tspan class="c">defaultSummary</tspan> (for accuracy, RMSE, etc), <tspan class="c">twoClassSummary</tspan></text><text x="1040" y="268" textLength="427">(for ROC curves), and <tspan class="c">prSummary</tspan> (for information retrieval). For</text><text x="1040" y="290" textLength="413">the last two functions, the option <tspan class="g">classProbs</tspan> must be set to</text><text x="1040" y="312" class="dk" textLength="38">TRUE.</text>
<text x="1040" y="412" textLength="438">To let <tspan class="c">train</tspan> determine the values of the tuning parameter(s), the</text><text x="1040" y="435" textLength="397"><tspan class="g">tuneLength</tspan> option controls how many values <tspan class="bk">per tuning</tspan></text><text x="1040" y="457" textLength="149">parameter to evaluate.</text><text x="1040" y="501" textLength="403">Alternatively, specific values of the tuning parameters can be</text><text x="1040" y="522" textLength="272">declared using the <tspan class="g">tuneGrid</tspan> argument:</text>
<text x="1042" y="777" textLength="420">For tuning, <tspan class="c">train</tspan> can also generate random tuning parameter</text><text x="1042" y="799" textLength="434">combinations over a wide range. <tspan class="g">tuneLength</tspan> controls the total</text><text x="1042" y="821" textLength="401">number of combinations to evaluate. To use random search:</text>
<text x="1040" y="970" textLength="424">With a large class imbalance, <tspan class="c">train</tspan> can subsample the data to</text><text x="1040" y="992" textLength="315">balance the classes them prior to model fitting.</text><text x="1040" y="1071" textLength="431">Other values are <tspan class="q">"up"</tspan>, <tspan class="q">"smote"</tspan>, or <tspan class="q">"rose"</tspan>. The latter two may</text><text x="1040" y="1092" textLength="233">require additional package installs.</text>
<text x="39" y="1162" font-size="12" textLength="372"><tspan fill="#48b" text-decoration="underline">CC BY</tspan> Max Kuhn  •  max@rstudio.com  •  <tspan class="r s">https://github.com/topepo/</tspan></text><text x="1138" y="1162" font-size="12" textLength="366">Learn more at <tspan class="r s">https://topepo.github.io/caret/</tspan>  •  Updated: 9/17</text>
</g>
<g class="mono" font-size="15" fill="#333">
<text x="54" y="293" textLength="321"><tspan class="c">train</tspan>(y ~ x1 + x2, <tspan class="g">data</tspan> = dat, ...)</text><text x="54" y="314" textLength="440"><tspan class="c">train</tspan>(<tspan class="g">x</tspan> = predictor_df, <tspan class="g">y</tspan> = outcome_vector, ...)</text><text x="54" y="335" textLength="340"><tspan class="c">train</tspan>(recipe_object, <tspan class="g">data</tspan> = dat, ...)</text>
<text x="54" y="802" textLength="356"><tspan class="c">train</tspan>(y ~ ., <tspan class="g">data</tspan> = dat, <tspan class="g">method</tspan> = <tspan class="q">"rf"</tspan>,</text><text x="108" y="823" fill="#777" textLength="256"># options to `randomForest`:</text><text x="108" y="844" textLength="165"><tspan class="g">importance</tspan> = TRUE)</text>
<text x="55" y="1005" fill="#777" textLength="174"># on MacOS or Linux</text><text x="55" y="1026" textLength="119"><tspan class="c">library</tspan>(<tspan class="r">doMC</tspan>)</text><text x="55" y="1047" textLength="193"><tspan class="c">registerDoMC</tspan>(<tspan class="g">cores</tspan>=4)</text><text x="284" y="1005" fill="#777" textLength="112"># on Windows</text><text x="284" y="1026" textLength="174"><tspan class="c">library</tspan>(<tspan class="r">doParallel</tspan>)</text><text x="284" y="1047" textLength="183">cl &lt;- <tspan class="c">makeCluster</tspan>(2)</text><text x="284" y="1067" textLength="202"><tspan class="c">registerDoParallel</tspan>(cl)</text>
<text x="548" y="183" textLength="430"><tspan class="c">train</tspan>(, <tspan class="g">preProc</tspan> = c(<tspan class="q">"method1"</tspan>, <tspan class="q">"method2"</tspan>), ...)</text><text x="548" y="693" textLength="395"><tspan class="c">train</tspan>(y ~ ., <tspan class="g">data</tspan> = dat, <tspan class="g">method</tspan> = <tspan class="q">"cubist"</tspan>,</text><text x="603" y="713" textLength="331" class="c">trControl = trainControl(<tspan fill="#333">&lt;options&gt;))</tspan></text><text x="548" y="855" textLength="385"><tspan class="c">trainControl</tspan>(<tspan class="g">method</tspan> = &lt;method&gt;, &lt;options&gt;)</text>
<text x="1040" y="175" textLength="402"><tspan class="c">trainControl</tspan>(<tspan class="g">summaryFunction</tspan> = &lt;R function&gt;,</text><text x="1160" y="196" textLength="211"><tspan class="g">classProbs</tspan> = &lt;logical&gt;)</text>
<text x="1040" y="559" textLength="410">grid &lt;- <tspan class="c">expand.grid</tspan>(<tspan class="g">alpha</tspan> = <tspan class="c">c</tspan>(0.1, 0.5, 0.9),</text><text x="1223" y="580" textLength="220"><tspan class="g">lambda</tspan> = <tspan class="c">c</tspan>(0.001, 0.01))</text><text x="1040" y="617" textLength="348"><tspan class="c">train</tspan>(<tspan class="g">x</tspan> = x, <tspan class="g">y</tspan> = y, <tspan class="g">method</tspan> = "glmnet",</text><text x="1095" y="638" textLength="284"><tspan class="g">preProc</tspan> = <tspan class="c">c</tspan>(<tspan class="q">"center"</tspan>, <tspan class="q">"scale"</tspan>),</text><text x="1095" y="659" textLength="147"><tspan class="g">tuneGrid</tspan> = grid)</text><text x="1042" y="865" textLength="285"><tspan class="c">trainControl</tspan>(<tspan class="g">search</tspan> = <tspan class="q">"random"</tspan>)</text><text x="1040" y="1035" textLength="285"><tspan class="c">trainControl</tspan>(<tspan class="g">sampling</tspan> = <tspan class="q">"down"</tspan>)</text>
</g>
</svg>
<p class="desc">Modeling and Machine Learning in R with<br>the caret package by Max Kuhn. Updated<br>September 17.</p>
<a class="btn">DOWNLOAD</a>
</article>

<article class="card">
<h2 class="card-title">cartography</h2>
<svg class="thumb rob" viewBox="10 45 1509 1182" preserveAspectRatio="none">
<path fill="#e4e4e4" d="M800 45h718v106q-80 8-130-2t-110-6-120-14-130 8-120-20q-20-20-30-30l-65-30z"/><path fill="#d6d6d6" d="M1010 70q120-20 190-10t160-15h158v64q-60 20-130 4t-170 12-160-10-48-45z"/><path fill="#c9c9c9" d="M1240 72q40-16 100-14t90-13h88v20q-60 14-100 12t-90 10-88-15z"/><path fill="#b5b5b5" d="M1385 45h133v24q-40 10-60-2t-73-22z"/>
<text x="51" y="116" font-size="58" font-weight="300" fill="#1a1a1a" textLength="828">Thematic maps with cartography</text><text x="890" y="116" font-size="50" font-weight="300" fill="#444" textLength="40">: :</text><text x="945" y="116" font-size="45" font-weight="700" fill="#111" textLength="276">CHEAT SHEET</text>
<rect x="50" y="186" width="344" height="500" fill="#f2f3f2"/>
<g font-size="34" fill="#5b93cf"><text x="424" y="168" textLength="158">Symbology</text><text x="786" y="168" textLength="236">Transformations</text><text x="1153" y="168" textLength="166">Map Layout</text></g>
<g font-size="19" font-weight="300" fill="#555"><text x="56" y="155" textLength="327">Use cartography with spatial objects from</text><text x="56" y="177" textLength="337">sf or sp packages to create thematic maps.</text>
<g font-size="16.5"><text x="417" y="194" textLength="312">In most functions the x argument should be  an sf</text><text x="417" y="212" textLength="318">object. sp objects are handled through spdf and df</text><text x="417" y="230">arguments.</text><text x="468" y="263">Choropleth</text><text x="468" y="335">Typology</text><text x="468" y="406" textLength="136">Proportional Symbols</text><text x="468" y="476" textLength="266">Colorized Proportional Symbols <tspan font-size="12" font-style="italic">(relative data)</tspan></text><text x="468" y="547" textLength="282">Colorized Proportional Symbols <tspan font-size="12" font-style="italic">(qualitative data)</tspan></text>
<text x="779" y="193" textLength="102">Polygons to Grid</text><text x="779" y="347" textLength="94">Points to Links</text><text x="779" y="483" textLength="121">Polygons to Borders</text><text x="1145" y="193">North Arrow:</text><text x="1145" y="238">Scale Bar:</text><text x="1145" y="284">Full Layout:</text><text x="1152" y="424" textLength="118">Figure Dimensions</text></g>
<g font-size="12.5"><text x="943" y="238" textLength="128">Grids layers can be used by</text><text x="943" y="251" textLength="170">choroLayer() or propSymbolsLayer().</text><text x="1020" y="405" textLength="88">Links layers can be</text><text x="1020" y="418" textLength="94">used by *LinkLayer().</text><text x="953" y="528" textLength="138">Borders layers can be used by</text><text x="953" y="541" textLength="90">discLayer() function</text><text x="1146" y="438" textLength="328">Get figure dimensions based on the dimension ratio of a spatial object,</text><text x="1146" y="452" textLength="186">figure margins and output resolution.</text><text x="820" y="381" font-size="15" font-style="italic">mtq</text><text x="886" y="381" font-size="15" font-style="italic">link</text><text x="979" y="381" font-size="15" font-style="italic">mtq_link</text></g></g>
<g class="mono" font-size="13.5" fill="#444"><text x="57" y="206" textLength="149">library(cartography)</text><text x="57" y="224">library(sf)</text><text x="57" y="242" textLength="240">mtq &lt;- st_read("martinique.shp")</text><text x="57" y="260" textLength="165">plot(st_geometry(mtq))</text><text x="57" y="278" textLength="315">propSymbolsLayer(x = mtq, var = "P13_POP",</text><text x="65" y="297" textLength="240">legend.title.txt = "Population",</text><text x="65" y="315" textLength="119">col = "#a7dfb4")</text>
<g font-size="12"><text x="468" y="276" textLength="218">choroLayer(x = mtq, var = "myvar",</text><text x="473" y="290" textLength="206">method = "quantile", nclass = 8)</text><text x="468" y="347" textLength="212">typoLayer(x = mtq, var = "myvar")</text><text x="468" y="418" textLength="256">propSymbolsLayer(x = mtq, var = "myvar",</text><text x="473" y="432" textLength="213">inches = 0.1, symbols = "circle")</text><text x="468" y="488" textLength="290">propSymbolsChoroLayer(x = mtq, var = "myvar",</text><text x="473" y="503">var2 = "myvar2")</text>
<text x="779" y="206" textLength="344">mtq_grid &lt;- getGridLayer(x = mtq, cellsize = 3.6e+07,</text><text x="791" y="219" textLength="220">type = "hexagonal", var = "myvar")</text><text x="779" y="360" textLength="284">mtq_link &lt;- getLinkLayer(x = mtq, df = link)</text><text x="779" y="495" textLength="213">mtq_border &lt;- getBorders(x = mtq)</text>
<text x="1145" y="206" textLength="150">north(pos = "topright")</text><text x="1145" y="251" textLength="118">barscale(size = 5)</text><text x="1145" y="296">layoutLayer(</text><text x="1152" y="310" textLength="136">title = "Martinique",</text><text x="1152" y="323">tabtitle = TRUE,</text><text x="1152" y="336">frame = TRUE,</text><text x="1152" y="350">author = "Author",</text><text x="1152" y="363" textLength="140">sources = "Sources",</text><text x="1152" y="377">north = TRUE,</text><text x="1152" y="391">scale = 5)</text>
<text x="1146" y="469" textLength="288">f_dim &lt;- getFigDim(x = sf_obj, width = 500,</text><text x="1160" y="482">mar = c(0,0,0,0))</text><text x="1146" y="496" textLength="296">png("fig.png", width = 500, height = f_dim[2])</text><text x="1146" y="510">par(mar = c(0,0,0,0))</text><text x="1146" y="524" textLength="188">plot(sf_obj, col = "#f29fcf")</text><text x="1146" y="537">dev.off()</text></g></g>
<g fill="none" stroke="#777" stroke-width="2"><path fill="#f7f8f7" d="M94 372q0-38 44-44 40-2 70 6 26 14 38 36 22 16 26 36 8 26 16 26l8-14 14-2 14-10 12-4 2-6 8 4-6 10-14 8-6 12-14 6 6 12-2 16 12 0 2 10-12-2-2 12 18 10 6 12 10 0 4 8-14 4-8 14 14 10 14 4 8 14 12 2 8 12-6 6H266q-40-10-70-26-30-10-44-26-20-16-12-34-12-18-14-36 0-14 8-20-30-20-40-64z"/><path d="M120 332l18 30 40-26M138 362l-8 34-34-12M138 362l40 14 30-42M178 376l-14 34-34-14M178 376l48 2 20-14M226 378l-8 40-54-8M226 378l36 30M218 418l44-10M218 418l-10 32-60-8 16-32M208 450l60-20 22 14M148 442l-22-6M148 442l14 34 46-26M162 476l-12 14M240 440l10 40 48-10M250 480l14 60M208 450l20 26 22 4M298 470l6 40 30 10"/></g>
<g fill="#a6dcb3" stroke="#5f8f6b" stroke-width="1.5"><circle cx="207" cy="496" r="37"/><circle cx="260" cy="508" r="25"/><circle cx="295" cy="472" r="19"/><circle cx="240" cy="405" r="16"/><circle cx="288" cy="427" r="14"/><circle cx="235" cy="446" r="12"/><circle cx="222" cy="472" r="14"/><circle cx="186" cy="495" r="16"/><circle cx="320" cy="522" r="15"/><circle cx="278" cy="545" r="17"/><circle cx="199" cy="382" r="10"/><circle cx="167" cy="353" r="8"/><circle cx="169" cy="406" r="8"/><circle cx="133" cy="400" r="7"/><circle cx="111" cy="369" r="5"/><circle cx="148" cy="344" r="4"/><circle cx="127" cy="348" r="3"/><circle cx="167" cy="373" r="4"/><circle cx="139" cy="448" r="7"/><circle cx="162" cy="453" r="7"/><circle cx="174" cy="436" r="4"/><circle cx="152" cy="474" r="6"/><circle cx="167" cy="485" r="7"/><circle cx="218" cy="397" r="7"/><circle cx="318" cy="549" r="12"/></g>
<path fill="#50b266" d="M411 252h51v52h-51z"/><path fill="#a8dcb4" d="M411 252h22l4 22-26 6z"/><path fill="#2f8a3d" d="M434 282l28-6v28h-26z"/><path fill="#dff0df" d="M411 284l20-4 4 24h-24z"/>
<path fill="#c7e3c3" d="M411 321h51v52h-51z"/><path fill="#e7a8b4" d="M411 321h24l4 14-14 12-14-4z"/><path fill="#93cce4" d="M424 346l14-8 10 12-8 14-18-4z"/><path fill="#a8cfae" d="M411 350l14 0 4 23h-18z"/><path fill="#dcb492" d="M446 350h16v23h-30z"/>
<path fill="#b3ae81" d="M411 392h51v52h-51zM411 463h51v52h-51zM411 534h51v52h-51z"/><g fill="#2f7d3a"><circle cx="435" cy="420" r="13"/><circle cx="421" cy="401" r="7"/><circle cx="453" cy="405" r="5"/><circle cx="454" cy="434" r="6"/><circle cx="419" cy="436" r="4"/></g><g fill="#7fcf86"><circle cx="421" cy="472" r="7"/><circle cx="435" cy="491" r="13"/><circle cx="453" cy="476" r="5" fill="#2f7d3a"/><circle cx="454" cy="504" r="6" fill="#2f7d3a"/><circle cx="419" cy="507" r="4" fill="#2f7d3a"/></g><circle cx="421" cy="543" r="7" fill="#e7a8b4"/><circle cx="442" cy="552" r="6" fill="#e7a8b4"/>
<g id="island"><path fill="#5aa45e" stroke="#2d6a34" stroke-width="1" d="M781 242q2-8 12-8 14 0 20 10l6 12 8 4 10-6 0 8-8 4 4 10 8 6 4 12 6 8 0 10-6 6-6-8-14 2-14-6 2-10-12-6-12-20-8-14z"/><path stroke="#155a20" stroke-width="6" stroke-dasharray="5 6" fill="none" d="M787 248l14 18 18 20 20 18M797 244l12 14 18 24"/></g><use href="#island" x="82"/>
<path stroke="#444" stroke-width="1.5" d="M852 277h9M921 416h11M852 543h9M857 416h6M860 413v6"/>
<g fill="#999"><circle cx="796" cy="386" r="3"/><circle cx="815" cy="386" r="2"/><circle cx="788" cy="404" r="2"/><circle cx="808" cy="406" r="4"/><circle cx="826" cy="394" r="2"/><circle cx="833" cy="407" r="3"/><circle cx="826" cy="428" r="3"/><circle cx="806" cy="440" r="4"/><circle cx="840" cy="444" r="2"/><circle cx="818" cy="446" r="2"/><circle cx="797" cy="396" r="2"/></g>
<g fill="none" stroke="#888" stroke-width="1.5"><path d="M877 388h30v56h-30zM892 388v56M877 400h30M877 411h30M877 422h30M877 433h30M968 440l20-38 10 22M968 440V384"/><path d="M866 516l18-4 14 10 6 16 16 14M872 524l16 6 4 20M884 514l-6 26 26 10"/></g><path fill="#a6dcb3" stroke="#72a47d" stroke-width="1.5" d="M781 516q2-8 12-8 14 0 22 10l8 14 12-4-2 14 6 12 10 14h-40l-16-26z"/>
<rect x="1298" y="194" width="184" height="218" fill="#fff" stroke="#999" stroke-width="1.5"/><rect x="1299" y="180" width="51" height="15" fill="#111"/><text x="1302" y="192" font-size="12" font-weight="700" fill="#fff" textLength="45">Martinique</text>
<path fill="#a3dbb1" stroke="#72a47d" stroke-width="2" d="M1305 224q2-18 24-20 26 2 46 18l16 20 8 22 14 4 12-14 16-4 10-6-2 10-16 8-8 8 10 8 14 0 6 6-12 6-2 14 8 10 10 2 4 10 10 10 8 16 4 16-2 20-8 16-10-4 0-14-16-4-16 2-12-10-16-6-16 2-18 4-10-14 4-12 16-8 16-2 0-12-20-14-20-18-12-24-10-22-16-18z"/><g fill="none" stroke="#78a882" stroke-width="1.5"><path d="M1325 206l10 26-20 20M1335 232l30-20M1335 232l16 26-24 20M1351 258l34-8M1351 258l20 20-16 32M1371 278l30-10M1371 278l30 18-10 34M1401 296l26-12M1401 296l30 24-16 34M1431 320l18-4M1431 320l10 40M1391 330l-12 26"/></g>
<g font-size="7" fill="#333"><text x="1303" y="401">Sources</text><text x="1303" y="410">Author</text><text x="1462" y="409">5 km</text><path d="M1474 199h7l-3.500 8zM1474 210h6v5h-6z"/></g>
<g font-size="9" fill="#555"><text x="1152" y="552">default</text><text x="1385" y="552">controled ratio</text></g>
</svg>
</article>

<article class="card">
<h2 class="card-title">data.table</h2>
<svg class="thumb src" viewBox="0 45 1509 1182" preserveAspectRatio="none">
<defs><linearGradient id="fade" x1="0" y1="0" x2="0" y2="1"><stop offset="0" stop-color="#ebecec"/><stop offset="1" stop-color="#fff"/></linearGradient></defs>
<g id="facets"><path fill="url(#fade)" d="M1138 45h370v135l-126-16-122-64-122 18z"/><path fill="#eceded" d="M1018 45h120v73z"/><path fill="#f4f5f5" d="M1138 45h122l-122 73z"/><path fill="#e1e3e3" d="M1260 45h248l-126 72z"/><path fill="#ececec" d="M1382 45h126l-126 72z"/><circle cx="932" cy="46" r="22" fill="#eff0f0"/><circle cx="1182" cy="48" r="20" fill="#eceeee"/><circle cx="1300" cy="112" r="20" fill="#e6e8e8"/><circle cx="1468" cy="112" r="22" fill="#eeefef"/><path fill="#fff" d="M900 20h120v25H900z"/></g>
<text class="l" x="32" y="152" font-size="52" fill="#6a6a6a" textLength="802">Data Transformation with data.table</text><text x="846" y="152" font-size="44" fill="#555" textLength="31">: :</text><text class="b" x="887" y="152" font-size="37" fill="#444" textLength="225">CHEAT SHEET</text>
<rect x="33" y="212" width="465" height="400" fill="#f4f5f5"/>
<path stroke="#d5d6d8" stroke-width="3" d="M522 211h466M1010 211h466M1010 446h466"/><path stroke="#ddd" stroke-width="1.5" d="M522 277h466M522 502h466"/>
<g font-size="31" fill="#333"><text x="48" y="248" textLength="88">Basics</text><text x="522" y="249" textLength="377">Manipulate columns with <tspan fill="#3273b8">j</tspan></text><text x="1010" y="486" textLength="128">Chaining</text></g>
<g class="b" font-size="15" fill="#444"><text x="522" y="300" textLength="66">EXTRACT</text><text x="522" y="524" textLength="87">SUMMARIZE</text><text x="1010" y="235" textLength="242">COMMON GROUPED OPREATIONS</text></g>
<g font-size="15.500" fill="#666"><text x="48" y="277" textLength="418">data.table is an extremely fast and memory efficient package</text><text x="48" y="295" textLength="401">for transforming data in R. It works by converting R's native</text><text x="48" y="313" textLength="410">data frame objects into data.tables with new and enhanced</text><text x="48" y="331" textLength="386">functionality. The basics of working with data.tables are:</text>
<g class="mid"><text x="265" y="377" font-size="21" class="bk" textLength="95">dt[<tspan fill="#25915c">i</tspan>, <tspan fill="#2270b5">j</tspan>, <tspan fill="#c0392b">by</tspan>]</text><text x="265" y="417" textLength="130">Take data.table <tspan class="bk">dt</tspan>,</text><text x="265" y="438" textLength="134">subset rows using <tspan fill="#25915c">i</tspan>,</text><text x="265" y="459" textLength="218">and manipulate columns with <tspan fill="#2270b5">j</tspan>,</text><text x="265" y="479" textLength="172">grouped according to <tspan class="b" fill="#c0392b">by</tspan>.</text></g>
<text x="48" y="518" textLength="436">data.tables are also data frames – functions that work with data</text><text x="48" y="537" textLength="301">frames therefore also work with data.tables.</text>
<text x="642" y="333" textLength="312">dt[, <tspan class="b" fill="#2270b5">c(2)</tspan>] – select column(s) by number. Prefix</text><text x="642" y="351" textLength="257">column numbers with “-” to deselect.</text><text x="649" y="426" textLength="266">dt[, <tspan class="b" fill="#2270b5">.(b, c)</tspan>] – select column(s) by name.</text><text x="638" y="553" textLength="332">dt[, <tspan class="b" fill="#2270b5">.(x = sum(a))</tspan>] – create a data.table with new</text>
<text x="1010" y="262" textLength="458">dt[, <tspan class="b" fill="#25915c">.(sum_b = sum(b))</tspan>, <tspan class="b" fill="#c0392b">by = .(a)</tspan>] – summarize rows within groups.</text><text x="1010" y="305" textLength="467">dt[, <tspan class="b" fill="#25915c">c := sum(b)</tspan>, <tspan class="b" fill="#c0392b">by = .(a)</tspan>] – create a new column and compute rows</text><text x="1010" y="323">within groups.</text><text x="1010" y="366" textLength="338">dt[, <tspan class="b" fill="#25915c">.SD[1]</tspan>, <tspan class="b" fill="#c0392b">by = .(a)</tspan>] – extract first row of groups.</text><text x="1010" y="409" textLength="341">dt[, <tspan class="b" fill="#25915c">.SD[.N]</tspan>, <tspan class="b" fill="#c0392b">by = .(a)</tspan>] – extract last row of groups.</text><text x="1010" y="525" textLength="410"><tspan class="bk">dt</tspan>[…][…] – perform a sequence of data.table operations by</text><text x="1010" y="543" textLength="155"><tspan font-style="italic">chaining</tspan> multiple “[]”.</text></g>
<path fill="#a9abab" d="M524 320h14v14h-14zM556 320h15v14h-15z"/><path fill="#bf7c1c" d="M540 320h14v14h-14zM600 320h15v14h-15z"/><path fill="#d8d9d9" d="M524 336h14v49h-14zM556 336h15v49h-15z"/><path fill="#f3c77f" d="M540 336h14v49h-14zM600 336h15v49h-15z"/><path stroke="#f6ead8" stroke-width="1.500" d="M522 352h50M522 369h50M598 352h18M598 369h18"/><path fill="#333" d="M580 335h7v-2l6 3.500-6 3.500v-2h-7z"/>
<path fill="#a9abab" d="M524 412h14v14h-14z"/><path fill="#d8d9d9" d="M524 428h14v49h-14z"/><path fill="#bf7c1c" d="M540 412h14v14h-14zM556 412h15v14h-15zM600 412h15v14h-15zM617 412h15v14h-15z"/><path fill="#f3c77f" d="M540 428h14v49h-14zM556 428h15v49h-15zM600 428h15v49h-15zM617 428h15v49h-15z"/><path stroke="#f6ead8" stroke-width="1.500" d="M522 444h50M522 461h50M598 444h35M598 461h35"/><path fill="#333" d="M580 427h7v-2l6 3.500-6 3.500v-2h-7z"/><g class="b" fill="#fff" font-size="13"><text x="543" y="424">b</text><text x="560" y="424">c</text><text x="603" y="424">b</text><text x="621" y="424">c</text></g>
<path fill="#bf7c1c" d="M524 545h14v14h-14zM600 545h15v14h-15z"/><path fill="#a9abab" d="M540 545h14v14h-14zM556 545h15v14h-15z"/>
<path fill="#fff" stroke="#888" stroke-width="2" d="M1406 78l71 41v83l-71 41-72-41v-83z"/>
<path fill="#f1dc22" stroke="#a89a20" stroke-width="1" d="M1385 106l6-7q9-2 12 8 1 8 8 14 14 6 18 22l6 4-6 4h-42q-5-6 1-10-6-10 0-22 2-6 2-10z"/><path fill="#111" d="M1381 134h6v6h-4l-12 10 36 8 32-8-6-10v-5l26 13v8l-4 3v24h-9v-6l4-3v-12l-44 12-40-12v12l4 4v6h-12v-26l-4-3v-8z"/><path fill="#111" d="M1397 168l8 5-8 5-4-5zM1410 169h12v6h-12zM1393 180h10v6h-10zM1408 180l8-2 4 6-8 4z"/><text class="mono b" x="1406" y="208" text-anchor="middle" font-size="15.500" fill="#e8533c" textLength="96">data.table</text>
</svg>
</article>

<article class="card">
<h2 class="card-title">DeclareDesign</h2>
<svg class="thumb src" viewBox="19 45 1509 1182" preserveAspectRatio="none">
<use href="#facets" x="19"/>
<text class="l" x="52" y="129" font-size="58" fill="#777" textLength="418">DeclareDesign: :</text><text class="b" x="487" y="129" font-size="42" fill="#444" textLength="262">CHEAT SHEET</text>
<path stroke="#e8e8e8" stroke-width="3" d="M34 153h356M408 153h357M784 153h357M1160 153h356M34 433h356M34 543h356M408 340h357M408 446h357M1160 325h356M1160 446h356"/>
<g fill="#e7e7e7"><path d="M34 369h356v53H34zM34 477h356v52H34zM408 270h358v53H408zM408 378h358v53H408zM408 489h358v100H408zM788 271h357v114H788zM788 441h357v130H788zM1160 261h358v53h-358zM1160 382h358v52h-358zM1160 483h358v100h-358z"/></g>
<g class="soft">
<g class="b mid" font-size="31" fill="#5f87b8"><text x="211" y="189" textLength="92">Model</text><text x="586" y="189" textLength="109">Inquiry</text><text x="962" y="186" textLength="202">Data Strategy</text><text x="1317" y="185" textLength="246">Answer Strategy</text></g>
<g font-size="31" fill="#7f9ac6"><text x="38" y="278" textLength="157">Population</text><text x="791" y="259" textLength="136">Sampling</text><text x="791" y="427" textLength="320">Treatment assignment</text></g>
<g font-size="15" fill="#777"><g font-style="italic"><text x="38" y="221" textLength="312">What is your model of the world, including how</text><text x="38" y="239" textLength="321">outcomes respond to interventions in the world?</text><text x="38" y="306" textLength="300">Define the size of the population, hierarchical</text><text x="38" y="324" textLength="294">structure (if any), and background variables.</text><text x="415" y="217" textLength="338">What is the research question you want to answer?</text><text x="792" y="216" textLength="344">How will you generate data to answer your inquiry?</text><text x="1167" y="217" textLength="328">How will you generate an answer to your inquiry?</text></g>
<text x="38" y="357" textLength="308">Simple dataset with no background variables</text><text x="38" y="467" textLength="287">Simple dataset with background variables</text><text x="415" y="263" textLength="109">Causal inquiries</text><text x="409" y="370" textLength="141">Descriptive inquiries</text><text x="415" y="474" textLength="155">Conditional estimands</text><text x="1167" y="248" textLength="217">OLS with robust standard errors</text><text x="1161" y="353" textLength="298">2SLS instrumental variables regression with</text><text x="1161" y="371">robust SEs</text><text x="1161" y="475" textLength="139">Difference-in-means</text></g>
<g class="mono" font-size="16.700" fill="#555"><text x="38" y="392" textLength="336">pop &lt;- declare_population(N = 100)</text><text x="38" y="411">pop()</text><text x="38" y="498" textLength="266">declare_population(N = 100,</text><text x="226" y="518" textLength="128">X = rnorm(N))</text>
<text x="415" y="293">declare_estimand(</text><text x="435" y="313" textLength="256">ATE = mean(Y_Z_1 - Y_Z_0))</text><text x="415" y="400">declare_estimand(</text><text x="435" y="420" textLength="206">Y_median = median(Y))</text><text x="415" y="512">declare_estimand(</text><text x="435" y="532" textLength="267">LATE = mean(Y_Z_1 - Y_Z_0),</text><text x="435" y="550" textLength="256">subset = complier == TRUE)</text>
<text x="793" y="296" textLength="246">declare_sampling(n = 100)</text><text x="793" y="335">declare_sampling(</text><text x="813" y="355">strata_n = 20,</text><text x="813" y="374" textLength="197">strata = urban_area)</text><text x="793" y="469" textLength="267">declare_assignment(m = 100)</text><text x="793" y="508">declare_assignment(</text><text x="813" y="527" textLength="197">clusters = villages,</text><text x="813" y="547">m = 10)</text>
<text x="1167" y="284">declare_estimator(</text><text x="1187" y="303" textLength="246">Y ~ Z, model = lm_robust)</text><text x="1167" y="403">declare_estimator(</text><text x="1187" y="423" textLength="285">Y ~ D | Z, model = iv_robust)</text><text x="1167" y="508">declare_estimator(</text><text x="1187" y="527">Y ~ Z,</text><text x="1187" y="547" textLength="275">model = difference_in_means)</text></g>
</g>
</svg>
</article>
</section>
</main>
<script src="fit.js"></script>
</body>
</html>
```

FILE: fit.js
```js
// Scale the glyphs of measured thumbnail lines instead of only their spacing.
document.querySelectorAll('.thumb text[textLength]').forEach(function (line) {
  line.setAttribute('lengthAdjust', 'spacingAndGlyphs');
});
```

FILE: styles.css
```css
body {
  margin: 0;
  background: #fff;
  color: #404040;
  font-family: "Noto Sans CJK SC", "Open Sans", sans-serif;
}

.page {
  width: 2036px;
  height: 1554px;
  overflow: hidden;
}

.page-title {
  margin: 0;
  font-size: 80.5px;
  line-height: 76px;
  font-weight: 400;
}

.lead {
  margin: 33px 0 163px;
  font-size: 32.2px;
  line-height: 52px;
}

.grid {
  display: grid;
  grid-template-columns: repeat(3, 637px);
  column-gap: 59.5px;
  row-gap: 133px;
  margin-left: -1px;
}

.card {
  display: flex;
  flex-direction: column;
  align-items: center;
  text-align: center;
}

.card-title {
  margin: 0 0 35px;
  font-size: 48.4px;
  line-height: 60px;
  font-weight: 400;
}

.thumb {
  display: block;
  width: 510px;
  height: 394px;
  border-radius: 3px;
  background: #fff;
  box-shadow: 6px 6px 0 #e6e6e6;
  text-align: left;
  text-rendering: geometricPrecision;
}

.desc {
  margin: 46px 0 54px;
  font-size: 32.25px;
  line-height: 52px;
  white-space: nowrap;
}

.link { color: #4a86be; }

.btn {
  box-sizing: border-box;
  width: 247px;
  height: 88px;
  margin-right: 8px;
  border-radius: 6px;
  background: #4f8ec8;
  color: #fff;
  font-size: 26.7px;
  line-height: 86px;
  font-weight: 700;
}

/* Thumbnail typography */
.arial { font-family: "Liberation Sans", sans-serif; }
.src { font-family: "Noto Sans CJK SC", sans-serif; }
.rob { font-family: Roboto, sans-serif; }
.mono { font-family: "DejaVu Sans Mono", monospace; }
.mid { text-anchor: middle; }
.l { font-weight: 300; }
.b { font-weight: 700; }
.bk { font-weight: 700; fill: #333; }
.dk { font-family: "Liberation Sans", sans-serif; fill: #333; }
.bl { fill: #2a6099; }
.or { fill: #e07b35; }
.gr { fill: #2b9a4a; }
.re { fill: #d8402f; }
.cy { fill: #2b8fd0; }
.soft { filter: blur(1px); }

/* R syntax colours */
.c, .g, .p, .q, .r, .k { font-family: "DejaVu Sans Mono", monospace; font-size: 15px; }
.c { fill: #3b78c4; }
.g { fill: #3c9a4c; }
.p { fill: #b06ad6; }
.q { fill: #8a44ad; }
.r { fill: #d8402f; }
.k { fill: #333; }
.s { font-size: 11px; }
```
